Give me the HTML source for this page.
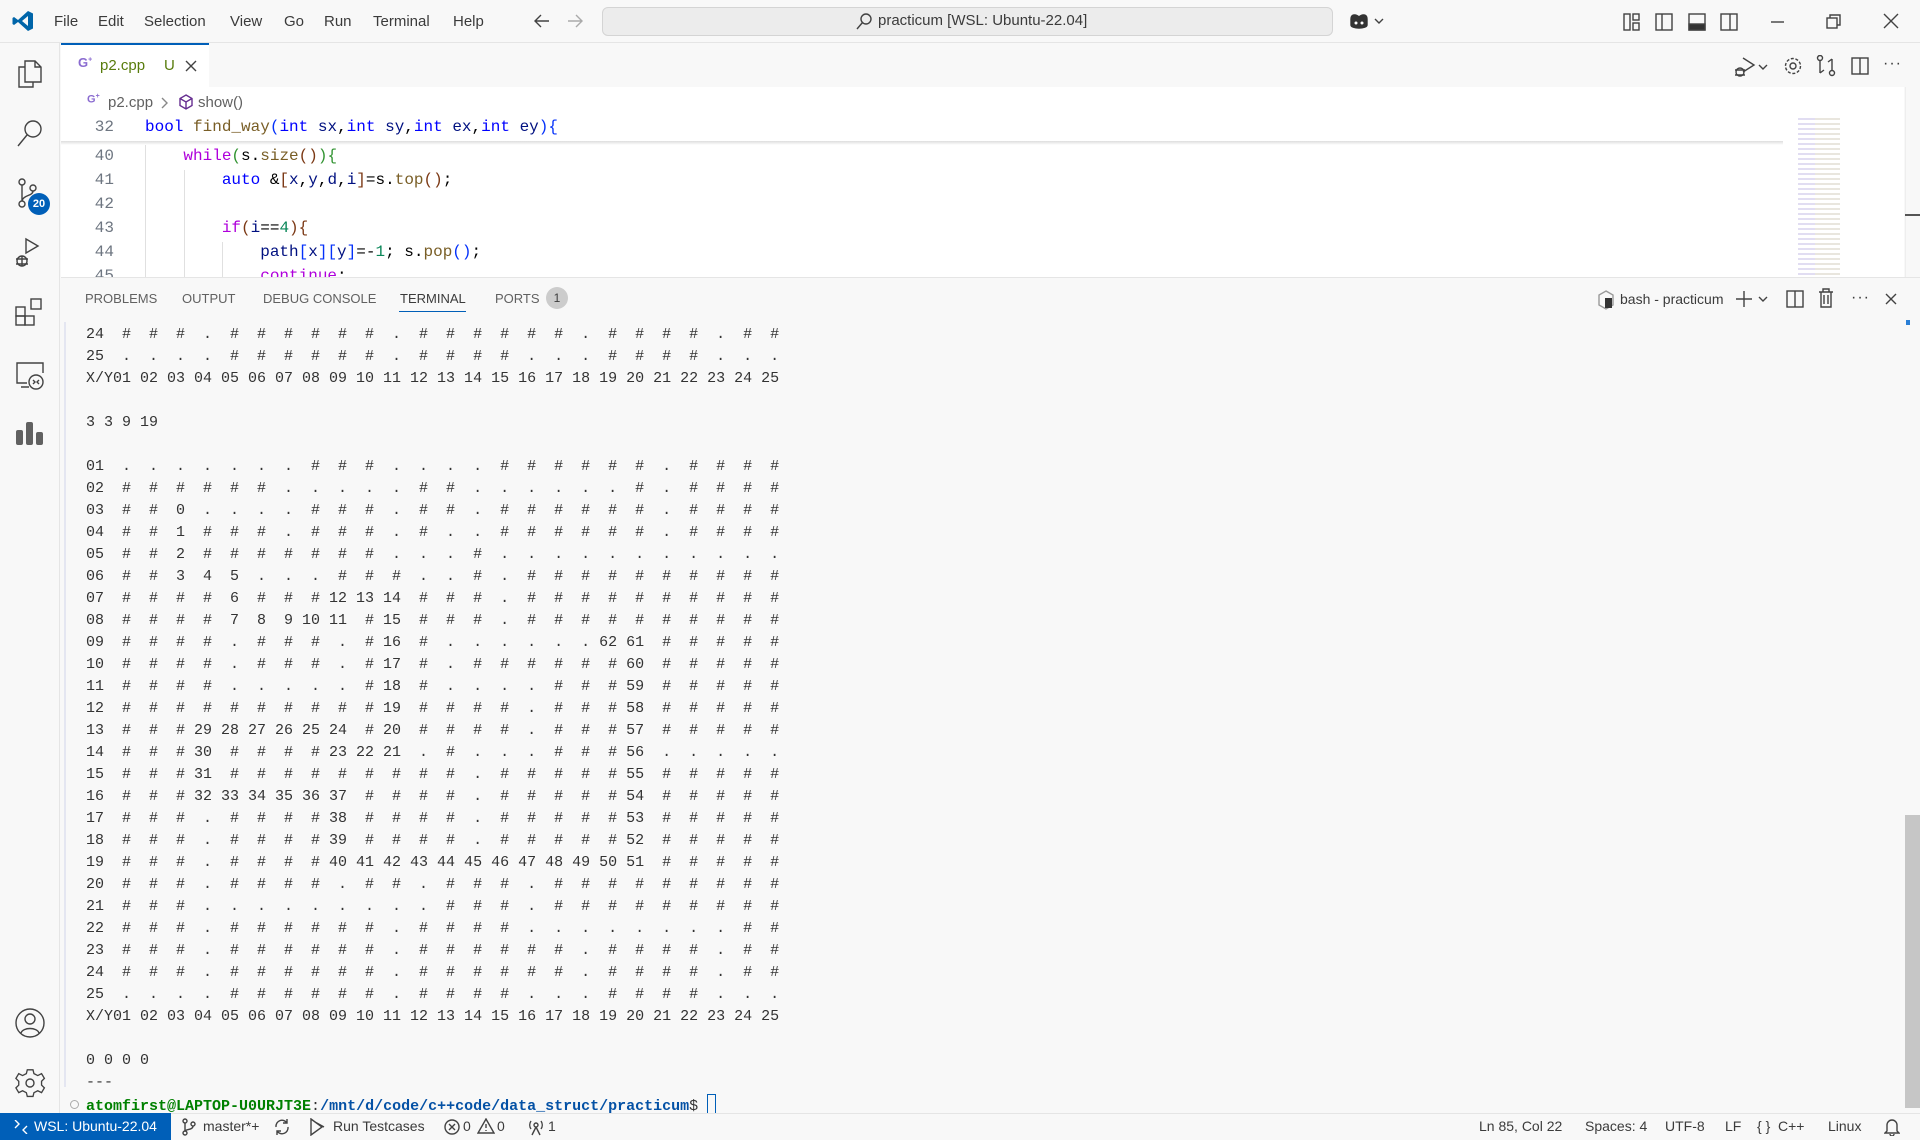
<!DOCTYPE html>
<html><head><meta charset="utf-8"><style>
*{margin:0;padding:0;box-sizing:border-box}
body{width:1920px;height:1140px;overflow:hidden;background:#f8f8f8;font-family:"Liberation Sans",sans-serif;color:#3b3b3b;position:relative}
.a{position:absolute}
.menu span{position:absolute;top:13px;font-size:15px;color:#3b3b3b}
svg{position:absolute;fill:none;stroke:#424242;stroke-width:1.4}
.code{position:absolute;left:145px;font-size:16px;white-space:pre;font-family:"Liberation Mono",monospace;color:#000}
.ln{position:absolute;left:80px;width:34px;text-align:right;font-size:16px;font-family:"Liberation Mono",monospace;color:#6e7681}
.k{color:#0000ff}.f{color:#795e26}.p{color:#001080}.c{color:#af00db}.n{color:#098658}.b1{color:#0431fa}.b2{color:#319331}.b3{color:#7b3814}
.ptab{position:absolute;top:291px;font-size:13px;color:#616161}
#term{position:absolute;left:86px;top:324px;font-size:15px;line-height:22px;white-space:pre;font-family:"Liberation Mono",monospace;color:#333}
.st{position:absolute;top:1118px;font-size:14px;color:#3b3b3b}
</style></head><body>
<div class="a" style="left:0;top:0;width:1920px;height:43px;background:#f8f8f8;border-bottom:1px solid #e5e5e5"></div>
<svg style="left:12px;top:10px" width="22" height="22" viewBox="0 0 22 22"><path d="M16 1 L21 3.5 V18.5 L16 21 L6 12 L2 15 L0.5 14 V8 L2 7 L6 10 Z M16 6 L10 11 L16 16 Z" fill="#0065a9" stroke="none" fill-rule="evenodd"/></svg>
<div class="menu"><span style="left:54px">File</span><span style="left:98px">Edit</span><span style="left:144px">Selection</span><span style="left:230px">View</span><span style="left:284px">Go</span><span style="left:324px">Run</span><span style="left:373px">Terminal</span><span style="left:453px">Help</span></div>
<svg style="left:533px;top:13px" width="18" height="16"><path d="M16 8H2M8 2L2 8L8 14"/></svg>
<svg style="left:566px;top:13px" width="18" height="16"><path d="M2 8H16M10 2L16 8L10 14" stroke="#aaa"/></svg>
<div class="a" style="left:602px;top:7px;width:731px;height:29px;background:#ececec;border:1px solid #d4d4d4;border-radius:6px"></div>
<svg style="left:855px;top:12px" width="18" height="18"><circle cx="11" cy="7" r="5"/><path d="M7.5 10.5L2 17"/></svg>
<div class="a" style="left:878px;top:12px;font-size:15px">practicum [WSL: Ubuntu-22.04]</div>
<svg style="left:1348px;top:11px" width="22" height="20"><path d="M3 8C3 3 8 3 11 6C14 3 19 3 19 8V14C19 18 3 18 3 14Z" fill="#333" stroke="#333"/><circle cx="8" cy="12" r="1.5" fill="#fff" stroke="none"/><circle cx="14" cy="12" r="1.5" fill="#fff" stroke="none"/></svg>
<svg style="left:1374px;top:17px" width="10" height="8"><path d="M1 2L5 6L9 2"/></svg>
<svg style="left:1623px;top:13px" width="18" height="18"><rect x="1" y="1" width="6" height="16"/><rect x="10" y="1" width="6" height="6"/><rect x="10" y="10" width="6" height="7"/></svg>
<svg style="left:1655px;top:13px" width="18" height="18"><rect x="1" y="1" width="16" height="16"/><path d="M7 1V17"/></svg>
<svg style="left:1688px;top:13px" width="18" height="18"><rect x="1" y="1" width="16" height="16"/><rect x="1" y="11" width="16" height="6" fill="#333"/></svg>
<svg style="left:1720px;top:13px" width="18" height="18"><rect x="1" y="1" width="16" height="16"/><path d="M10 1V17"/></svg>
<svg style="left:1770px;top:14px" width="16" height="16"><path d="M1 8H14"/></svg>
<svg style="left:1826px;top:14px" width="16" height="16"><rect x="1" y="4" width="10" height="10"/><path d="M4 4V1H14V11H11"/></svg>
<svg style="left:1883px;top:13px" width="16" height="16"><path d="M1 1L15 15M15 1L1 15"/></svg>

<div class="a" style="left:0;top:43px;width:60px;height:1070px;background:#f8f8f8;border-right:1px solid #e5e5e5"></div>
<svg style="left:16px;top:59px" width="28" height="30" viewBox="0 0 28 30"><path d="M9 8H3V28H17V23M9 2H19L25 8V23H9Z M19 2V8H25"/></svg>
<svg style="left:16px;top:119px" width="28" height="30"><circle cx="17" cy="10" r="8"/><path d="M11 16L2 27"/></svg>
<svg style="left:15px;top:178px" width="32" height="32"><circle cx="7" cy="4" r="3"/><circle cx="7" cy="26" r="3"/><circle cx="18" cy="10" r="3"/><path d="M7 7V23M18 13C18 18 8 17 7 23"/></svg>
<div class="a" style="left:28px;top:193px;width:22px;height:22px;border-radius:11px;background:#005fb8;color:#fff;font-size:11px;font-weight:bold;text-align:center;line-height:22px">20</div>
<svg style="left:14px;top:237px" width="30" height="32"><path d="M12 2V16L24 9Z"/><circle cx="8" cy="24" r="5"/><path d="M2 22H14M2 27H14M8 19V29"/></svg>
<svg style="left:15px;top:298px" width="30" height="30"><rect x="1" y="9" width="9" height="9"/><rect x="1" y="18" width="9" height="9"/><rect x="10" y="18" width="9" height="9"/><rect x="16" y="1" width="10" height="10"/></svg>
<svg style="left:15px;top:361px" width="30" height="30"><path d="M12 22H2V2H28V12M6 26H14"/><circle cx="21" cy="21" r="7"/><path d="M18 19L20 21L18 23M24 19L22 21L24 23"/></svg>
<svg style="left:15px;top:420px" width="30" height="26"><rect x="1" y="10" width="7" height="15" rx="2" fill="#616161" stroke="none"/><rect x="11" y="2" width="7" height="23" rx="2" fill="#616161" stroke="none"/><rect x="21" y="12" width="7" height="13" rx="2" fill="#616161" stroke="none"/></svg>
<svg style="left:14px;top:1007px" width="32" height="32"><circle cx="16" cy="16" r="14"/><circle cx="16" cy="12" r="5"/><path d="M7 26C9 20 23 20 25 26"/></svg>
<svg style="left:14px;top:1067px" width="32" height="32" viewBox="0 0 32 32"><path d="M13 2H19L20 6L24 8L28 6L31 11L28 14V18L31 21L28 26L24 24L20 26L19 30H13L12 26L8 24L4 26L1 21L4 18V14L1 11L4 6L8 8L12 6Z" transform="scale(0.95) translate(1 1)"/><circle cx="16" cy="16" r="4"/></svg>

<div class="a" style="left:61px;top:43px;width:148px;height:45px;background:#fff;border-top:2px solid #005fb8"></div>
<div class="a" style="left:78px;top:55px;font-size:13px;font-weight:bold;color:#8a6bd0">G<sup style="font-size:7px">+</sup></div>
<div class="a" style="left:100px;top:57px;font-size:15px;color:#587c0c">p2.cpp</div>
<div class="a" style="left:164px;top:57px;font-size:15px;color:#587c0c">U</div>
<svg style="left:185px;top:60px" width="12" height="12"><path d="M1 1L11 11M11 1L1 11"/></svg>
<svg style="left:1734px;top:56px" width="22" height="22"><path d="M9 2L20 9L9 16"/><circle cx="6" cy="16" r="4"/><path d="M1 14H11M1 19H11"/></svg>
<svg style="left:1758px;top:63px" width="10" height="8"><path d="M1 2L5 6L9 2"/></svg>
<svg style="left:1783px;top:56px" width="20" height="20"><circle cx="10" cy="10" r="3"/><circle cx="10" cy="10" r="7.5" stroke-dasharray="3 1.7"/></svg>
<svg style="left:1816px;top:55px" width="20" height="22"><circle cx="4" cy="3" r="2.5"/><circle cx="16" cy="18" r="2.5"/><path d="M4 6V18M4 18L8 15M16 15V4M16 4L12 7"/></svg>
<svg style="left:1851px;top:57px" width="18" height="18"><rect x="1" y="1" width="16" height="16"/><path d="M9 1V17"/></svg>
<div class="a" style="left:1883px;top:55px;font-size:16px;letter-spacing:1px">···</div>

<div class="a" style="left:61px;top:87px;width:1843px;height:191px;background:#fff"></div>
<div class="a" style="left:87px;top:93px;font-size:11px;font-weight:bold;color:#8a6bd0">G<sup style="font-size:7px">+</sup></div>
<div class="a" style="left:108px;top:94px;font-size:15px;color:#616161">p2.cpp</div>
<svg style="left:161px;top:97px" width="8" height="12"><path d="M1 1L6 6L1 11" stroke="#888"/></svg>
<svg style="left:178px;top:94px" width="16" height="16"><path d="M8 1L14 4.5V11.5L8 15L2 11.5V4.5Z M2 4.5L8 8L14 4.5M8 8V15" stroke="#652d90"/></svg>
<div class="a" style="left:198px;top:94px;font-size:15px;color:#616161">show()</div>
<div class="ln" style="top:118px">32</div>
<div class="code" style="top:118px"><span class="k">bool</span> <span class="f">find_way</span><span class="b1">(</span><span class="k">int</span> <span class="p">sx</span>,<span class="k">int</span> <span class="p">sy</span>,<span class="k">int</span> <span class="p">ex</span>,<span class="k">int</span> <span class="p">ey</span><span class="b1">)</span><span class="b1">{</span></div>
<div class="a" style="left:61px;top:141px;width:1722px;height:4px;background:linear-gradient(#ddd,#fff)"></div>
<div class="a" style="left:145px;top:145px;width:1px;height:133px;background:#e0e0e0"></div>
<div class="a" style="left:184px;top:170px;width:1px;height:108px;background:#e0e0e0"></div>
<div class="a" style="left:222px;top:242px;width:1px;height:36px;background:#e0e0e0"></div>
<div class="ln" style="top:147px">40</div><div class="code" style="top:147px">    <span class="c">while</span><span class="b2">(</span>s.<span class="f">size</span><span class="b3">()</span><span class="b2">){</span></div>
<div class="ln" style="top:171px">41</div><div class="code" style="top:171px">        <span class="k">auto</span> &amp;<span class="b3">[</span><span class="p">x</span>,<span class="p">y</span>,<span class="p">d</span>,<span class="p">i</span><span class="b3">]</span>=s.<span class="f">top</span><span class="b3">()</span>;</div>
<div class="ln" style="top:195px">42</div>
<div class="ln" style="top:219px">43</div><div class="code" style="top:219px">        <span class="c">if</span><span class="b3">(</span><span class="p">i</span>==<span class="n">4</span><span class="b3">){</span></div>
<div class="ln" style="top:243px">44</div><div class="code" style="top:243px">            <span class="p">path</span><span class="b1">[</span><span class="p">x</span><span class="b1">][</span><span class="p">y</span><span class="b1">]</span>=-<span class="n">1</span>; s.<span class="f">pop</span><span class="b1">()</span>;</div>
<div class="a" style="left:61px;top:265px;width:1843px;height:13px;overflow:hidden"><div class="ln" style="left:19px;top:2px">45</div><div class="code" style="left:84px;top:2px">            <span class="c">continue</span>;</div></div>
<div class="a" style="left:1790px;top:115px;width:100px;height:162px;background:repeating-linear-gradient(#fff 0 3px,transparent 3px 5px),linear-gradient(90deg,#fff 0 8%,#c9c2e8 8% 25%,#d8d2c4 25% 50%,#fff 50%);opacity:.55"></div>
<div class="a" style="left:1905px;top:87px;width:1px;height:190px;background:#eee"></div>
<div class="a" style="left:1905px;top:214px;width:15px;height:2px;background:#555"></div>

<div class="a" style="left:61px;top:277px;width:1859px;height:1px;background:#e5e5e5"></div>
<div class="ptab" style="left:85px">PROBLEMS</div>
<div class="ptab" style="left:182px">OUTPUT</div>
<div class="ptab" style="left:263px">DEBUG CONSOLE</div>
<div class="ptab" style="left:400px;color:#3b3b3b">TERMINAL</div>
<div class="a" style="left:399px;top:311px;width:67px;height:1px;background:#005fb8"></div>
<div class="ptab" style="left:495px">PORTS</div>
<div class="a" style="left:546px;top:287px;width:22px;height:22px;border-radius:11px;background:#ccc;font-size:12px;text-align:center;line-height:22px">1</div>
<svg style="left:1597px;top:290px" width="18" height="20"><path d="M9 1L16 5V15L9 19L2 15V5Z" stroke="#999"/><rect x="8" y="8" width="7" height="10" fill="#333" stroke="none"/></svg>
<div class="a" style="left:1620px;top:291px;font-size:14px">bash - practicum</div>
<svg style="left:1735px;top:290px" width="18" height="18"><path d="M9 1V17M1 9H17"/></svg>
<svg style="left:1758px;top:295px" width="10" height="8"><path d="M1 2L5 6L9 2"/></svg>
<svg style="left:1786px;top:290px" width="18" height="18"><rect x="1" y="1" width="16" height="16"/><path d="M9 1V17"/></svg>
<svg style="left:1818px;top:288px" width="16" height="20"><path d="M1 4H15M5 4V1H11V4M3 4V19H13V4M6 7V16M10 7V16"/></svg>
<div class="a" style="left:1851px;top:289px;font-size:16px;letter-spacing:1px">···</div>
<svg style="left:1885px;top:293px" width="12" height="12"><path d="M1 1L11 11M11 1L1 11"/></svg>
<div class="a" style="left:64px;top:322px;width:2px;height:765px;background:#e4e6f1"></div>
<div class="a" style="left:1906px;top:320px;width:4px;height:5px;background:#2a7fd6"></div>
<div class="a" style="left:1905px;top:815px;width:15px;height:293px;background:#c6c6c6"></div>

<div id="term">24  #  #  #  .  #  #  #  #  #  #  .  #  #  #  #  #  #  .  #  #  #  #  .  #  #
25  .  .  .  .  #  #  #  #  #  #  .  #  #  #  #  .  .  .  #  #  #  #  .  .  .
X/Y01 02 03 04 05 06 07 08 09 10 11 12 13 14 15 16 17 18 19 20 21 22 23 24 25

3 3 9 19

01  .  .  .  .  .  .  .  #  #  #  .  .  .  .  #  #  #  #  #  #  .  #  #  #  #
02  #  #  #  #  #  #  .  .  .  .  .  #  #  .  .  .  .  .  .  #  .  #  #  #  #
03  #  #  0  .  .  .  .  #  #  #  .  #  #  .  #  #  #  #  #  #  .  #  #  #  #
04  #  #  1  #  #  #  .  #  #  #  .  #  .  .  #  #  #  #  #  #  .  #  #  #  #
05  #  #  2  #  #  #  #  #  #  #  .  .  .  #  .  .  .  .  .  .  .  .  .  .  .
06  #  #  3  4  5  .  .  .  #  #  #  .  .  #  .  #  #  #  #  #  #  #  #  #  #
07  #  #  #  #  6  #  #  # 12 13 14  #  #  #  .  #  #  #  #  #  #  #  #  #  #
08  #  #  #  #  7  8  9 10 11  # 15  #  #  #  .  #  #  #  #  #  #  #  #  #  #
09  #  #  #  #  .  #  #  #  .  # 16  #  .  .  .  .  .  . 62 61  #  #  #  #  #
10  #  #  #  #  .  #  #  #  .  # 17  #  .  #  #  #  #  #  # 60  #  #  #  #  #
11  #  #  #  #  .  .  .  .  .  # 18  #  .  .  .  .  #  #  # 59  #  #  #  #  #
12  #  #  #  #  #  #  #  #  #  # 19  #  #  #  #  .  #  #  # 58  #  #  #  #  #
13  #  #  # 29 28 27 26 25 24  # 20  #  #  #  #  .  #  #  # 57  #  #  #  #  #
14  #  #  # 30  #  #  #  # 23 22 21  .  #  .  .  .  #  #  # 56  .  .  .  .  .
15  #  #  # 31  #  #  #  #  #  #  #  #  #  .  #  #  #  #  # 55  #  #  #  #  #
16  #  #  # 32 33 34 35 36 37  #  #  #  #  .  #  #  #  #  # 54  #  #  #  #  #
17  #  #  #  .  #  #  #  # 38  #  #  #  #  .  #  #  #  #  # 53  #  #  #  #  #
18  #  #  #  .  #  #  #  # 39  #  #  #  #  .  #  #  #  #  # 52  #  #  #  #  #
19  #  #  #  .  #  #  #  # 40 41 42 43 44 45 46 47 48 49 50 51  #  #  #  #  #
20  #  #  #  .  #  #  #  #  .  #  #  .  #  #  #  .  #  #  #  #  #  #  #  #  #
21  #  #  #  .  .  .  .  .  .  .  .  .  #  #  #  .  #  #  #  #  #  #  #  #  #
22  #  #  #  .  #  #  #  #  #  #  .  #  #  #  #  .  .  .  .  .  .  .  .  #  #
23  #  #  #  .  #  #  #  #  #  #  .  #  #  #  #  #  #  .  #  #  #  #  .  #  #
24  #  #  #  .  #  #  #  #  #  #  .  #  #  #  #  #  #  .  #  #  #  #  .  #  #
25  .  .  .  .  #  #  #  #  #  #  .  #  #  #  #  .  .  .  #  #  #  #  .  .  .
X/Y01 02 03 04 05 06 07 08 09 10 11 12 13 14 15 16 17 18 19 20 21 22 23 24 25

0 0 0 0
---
<b style="color:#008000">atomfirst@LAPTOP-U0URJT3E</b>:<b style="color:#0451a5">/mnt/d/code/c++code/data_struct/practicum</b>$ <span style="display:inline-block;width:9px;height:20px;border:1px solid #005fb8;vertical-align:-4px"></span></div>
<div class="a" style="left:70px;top:1100px;width:9px;height:9px;border-radius:5px;border:1px solid #aaa"></div>

<div class="a" style="left:0;top:1113px;width:1920px;height:27px;background:#f8f8f8;border-top:1px solid #e5e5e5"></div>
<div class="a" style="left:0;top:1113px;width:171px;height:27px;background:#005fb8"></div>
<svg style="left:14px;top:1120px" width="14" height="14"><path d="M1 8L5 4L1 0M13 6L9 10L13 14" stroke="#fff"/></svg>
<div class="st" style="left:34px;color:#fff">WSL: Ubuntu-22.04</div>
<svg style="left:182px;top:1118px" width="14" height="18"><circle cx="3" cy="3" r="2"/><circle cx="3" cy="15" r="2"/><circle cx="11" cy="6" r="2"/><path d="M3 5V13M11 8C11 12 4 11 3 13"/></svg>
<div class="st" style="left:203px">master*+</div>
<svg style="left:273px;top:1118px" width="18" height="18"><path d="M3 9A6 6 0 0 1 14 5M15 9A6 6 0 0 1 4 13M14 1V5H10M4 17V13H8"/></svg>
<svg style="left:309px;top:1118px" width="18" height="18"><path d="M2 1L13 9L2 17Z M6 4L15 9"/></svg>
<div class="st" style="left:333px">Run Testcases</div>
<svg style="left:444px;top:1119px" width="16" height="16"><circle cx="8" cy="8" r="7"/><path d="M5 5L11 11M11 5L5 11"/></svg>
<div class="st" style="left:463px">0</div>
<svg style="left:477px;top:1118px" width="18" height="16"><path d="M9 1L17 15H1Z M9 6V10M9 12V13"/></svg>
<div class="st" style="left:497px">0</div>
<svg style="left:527px;top:1118px" width="18" height="18"><circle cx="9" cy="7" r="2"/><path d="M9 9L5 17M9 9L13 17M4 3A7 7 0 0 0 4 11M14 3A7 7 0 0 1 14 11"/></svg>
<div class="st" style="left:548px">1</div>
<div class="st" style="left:1479px">Ln 85, Col 22</div>
<div class="st" style="left:1585px">Spaces: 4</div>
<div class="st" style="left:1665px">UTF-8</div>
<div class="st" style="left:1725px">LF</div>
<div class="st" style="left:1757px">{ }&nbsp; C++</div>
<div class="st" style="left:1828px">Linux</div>
<svg style="left:1884px;top:1118px" width="16" height="18"><path d="M3 13V7A5 5 0 0 1 13 7V13L15 15H1Z M6 16A2 2 0 0 0 10 16"/></svg>
</body></html>
